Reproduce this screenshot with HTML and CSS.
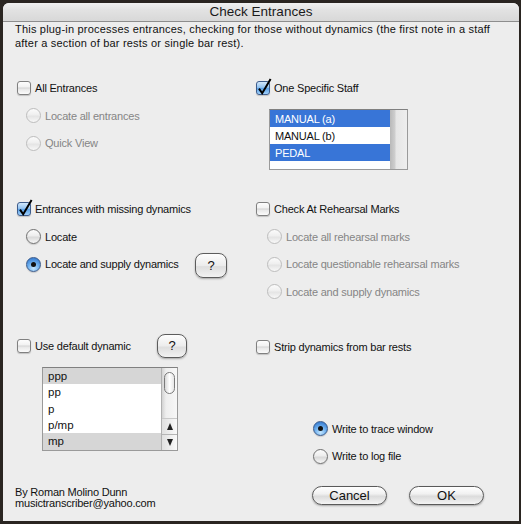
FILE: index.html
```html
<!DOCTYPE html>
<html>
<head>
<meta charset="utf-8">
<link rel="stylesheet" href="styles.css">
</head>
<body>
<div class="win">
  <div class="titlebar">Check Entrances</div>
  <p class="desc">This plug-in processes entrances, checking for those without dynamics (the first note in a staff<br>after a section of bar rests or single bar rest).</p>

  <div class="sec s1">
    <div class="col">
      <div class="opt"><span class="cb"></span><span>All Entrances</span></div>
      <div class="opt sub dis"><span class="rb off"></span><span>Locate all entrances</span></div>
      <div class="opt sub dis"><span class="rb off"></span><span>Quick View</span></div>
    </div>
    <div class="col">
      <div class="opt"><span class="cb on"><svg class="tick" viewBox="0 0 16 18"><path d="M3 10.6 L6.2 15.2 L14.6 1" fill="none" stroke="#000" stroke-width="2"/></svg></span><span>One Specific Staff</span></div>
      <div class="list staff">
        <div class="rows">
          <div class="row sel">MANUAL (a)</div>
          <div class="row">MANUAL (b)</div>
          <div class="row sel">PEDAL</div>
        </div>
        <div class="track"></div>
      </div>
    </div>
  </div>

  <div class="sec s2">
    <div class="col">
      <div class="opt"><span class="cb on"><svg class="tick" viewBox="0 0 16 18"><path d="M3 10.6 L6.2 15.2 L14.6 1" fill="none" stroke="#000" stroke-width="2"/></svg></span><span>Entrances with missing dynamics</span></div>
      <div class="opt sub"><span class="rb"></span><span>Locate</span></div>
      <div class="opt sub help-row w210"><span class="pair"><span class="rb on"></span><span>Locate and supply dynamics</span></span><span class="help big">?</span></div>
    </div>
    <div class="col rcol">
      <div class="opt"><span class="cb"></span><span>Check At Rehearsal Marks</span></div>
      <div class="opt rsub dis"><span class="rb off"></span><span>Locate all rehearsal marks</span></div>
      <div class="opt rsub dis"><span class="rb off"></span><span>Locate questionable rehearsal marks</span></div>
      <div class="opt rsub dis"><span class="rb off"></span><span>Locate and supply dynamics</span></div>
    </div>
  </div>

  <div class="sec s3">
    <div class="col">
      <div class="opt help-row w170"><span class="pair"><span class="cb"></span><span>Use default dynamic</span></span><span class="help small">?</span></div>
      <div class="list dyn">
        <div class="rows">
          <div class="row hl">ppp</div>
          <div class="row">pp</div>
          <div class="row">p</div>
          <div class="row">p/mp</div>
          <div class="row hl">mp</div>
        </div>
        <div class="sbar">
          <div class="thumb"></div>
          <div class="arrows">
            <span class="arr up"></span>
            <span class="arr down"></span>
          </div>
        </div>
      </div>
    </div>
    <div class="col">
      <div class="opt strip"><span class="cb"></span><span>Strip dynamics from bar rests</span></div>
      <div class="opt out first"><span class="rb on"></span><span>Write to trace window</span></div>
      <div class="opt out"><span class="rb"></span><span>Write to log file</span></div>
    </div>
  </div>

  <div class="footer">
    <div class="credit">By Roman Molino Dunn<br>musictranscriber@yahoo.com</div>
    <div class="btns">
      <span class="btn">Cancel</span>
      <span class="btn">OK</span>
    </div>
  </div>
</div>
</body>
</html>
```
FILE: styles.css
```css
html, body {
  margin: 0;
  padding: 0;
}
body {
  background: #2a2521;
  width: 521px;
  height: 524px;
  overflow: hidden;
  font-family: "Liberation Sans", Arial, sans-serif;
  font-size: 11px;
  letter-spacing: -0.2px;
  color: #111;
}
.win {
  margin: 3px 0 0 3px;
  width: 516px;
  height: 518px;
  background: #ededed;
  border-radius: 6px 6px 0 0;
  overflow: hidden;
}
.titlebar {
  height: 18px;
  line-height: 18px;
  border-bottom: 1px solid #8d8d8d;
  background: linear-gradient(#f0f0f0, #e2e2e2 40%, #d8d8d8);
  text-align: center;
  font-size: 13.5px;
  letter-spacing: 0;
  color: #1a1a1a;
}
.desc {
  margin: 0;
  padding: 0 12px;
  line-height: 14px;
  white-space: nowrap;
  letter-spacing: 0.2px;
  color: #111;
}
.sec {
  display: grid;
  grid-template-columns: 239px 1fr;
  padding-left: 14px;
}
.s1 { margin-top: 30px; }
.s2 { margin-top: 31px; }
.s3 { margin-top: 38px; }
.col {
  display: flex;
  flex-direction: column;
  gap: 11.5px;
  align-items: flex-start;
}
.opt {
  height: 16px;
  display: flex;
  align-items: center;
  gap: 4px;
  white-space: nowrap;
}
.opt.dis { color: #858585; }
.sub { padding-left: 9px; }
.rsub { padding-left: 11px; }

/* checkbox */
.cb {
  position: relative;
  flex: none;
  width: 14px;
  height: 14px;
  box-sizing: border-box;
  border: 1px solid #808080;
  border-radius: 3px;
  background: linear-gradient(#fdfdfd, #f2f2f2 40%, #d8d8d8 50%, #e9e9e9 62%, #fbfbfb);
  box-shadow: 0 1px 1px rgba(0,0,0,0.18);
}
.cb.on {
  border-color: #3d5c8c;
  background: linear-gradient(#d2e8fc, #94c4f1 45%, #5aa0e6 52%, #9fd0fb);
}
.tick {
  position: absolute;
  left: -1px;
  top: -4px;
  width: 16px;
  height: 18px;
  overflow: visible;
}

/* radio */
.rb {
  position: relative;
  flex: none;
  width: 15px;
  height: 15px;
  box-sizing: border-box;
  border-radius: 50%;
  border: 1px solid #707070;
  background: linear-gradient(#fcfcfc, #ededed 45%, #d9d9d9 55%, #f7f7f7);
  box-shadow: 0 1px 1px rgba(0,0,0,0.15);
}
.rb.off {
  border-color: #bdbdbd;
  background: linear-gradient(#fbfbfb, #efefef 45%, #e4e4e4 55%, #f8f8f8);
  box-shadow: none;
}
.rb.on {
  border-color: #3a5a8a;
  background: radial-gradient(circle at 50% 80%, #c4e6ff 0%, #6fb0ee 45%, #3d82d4 80%);
}
.rb.on::after {
  content: "";
  position: absolute;
  left: 4px;
  top: 4px;
  width: 5px;
  height: 5px;
  border-radius: 50%;
  background: #111;
}

/* help buttons */
.help-row {
  justify-content: space-between;
}
.w210 { width: 201px; }
.w170 { width: 170px; }
.pair {
  display: flex;
  align-items: center;
  gap: 4px;
}
.help {
  flex: none;
  box-sizing: border-box;
  display: flex;
  align-items: center;
  justify-content: center;
  border: 1px solid #5c5c5c;
  border-radius: 8px;
  background: linear-gradient(#fdfdfd, #ececec 50%, #dedede 55%, #f2f2f2);
  box-shadow: 0 1px 2px rgba(0,0,0,0.3);
  font-size: 13px;
  color: #111;
}
.help.big { width: 32px; height: 25px; margin-top: 3px; }
.help.small { width: 30px; height: 24px; }

/* lists */
.list {
  display: flex;
  box-sizing: border-box;
  border: 1px solid #9a9a9a;
  border-top-color: #808080;
  background: #fff;
  overflow: hidden;
}
.rows {
  flex: 1;
  display: flex;
  flex-direction: column;
}
.row {
  padding-left: 5px;
  display: flex;
  align-items: center;
  white-space: nowrap;
}
.staff {
  margin-left: 13px;
  margin-top: 1.5px;
  width: 139px;
  height: 61px;
}
.staff .row { height: 17px; }
.row.sel {
  background: #3875d7;
  color: #fff;
}
.track {
  width: 17px;
  background: linear-gradient(to right, #b9b9b9, #cfcfcf 5px, #e6e6e6 6px, #eeeeee);
}
.dyn {
  margin-left: 25px;
  margin-top: 1.5px;
  width: 136px;
  height: 84px;
}
.dyn .row {
  height: 16.8px;
  font-size: 11.5px;
  letter-spacing: 0;
}
.row.hl { background: #d6d6d6; }
.sbar {
  width: 15px;
  border-left: 1px solid #b0b0b0;
  background: linear-gradient(to right, #d2d2d2, #eeeeee 4px, #f7f7f7);
  display: flex;
  flex-direction: column;
  align-items: center;
}
.thumb {
  margin-top: 4px;
  width: 11px;
  height: 22px;
  box-sizing: border-box;
  border: 1px solid #7a7a7a;
  border-radius: 6px;
  background: linear-gradient(to right, #d8d8d8, #ffffff 50%, #e6e6e6);
}
.arrows {
  margin-top: auto;
  width: 100%;
  border-top: 1px solid #c9c9c9;
  background: linear-gradient(to right, #e0e0e0, #fafafa);
}
.arr {
  display: flex;
  align-items: center;
  justify-content: center;
  height: 15px;
}
.arr.up { border-bottom: 1px solid #b5b5b5; }
.arr::before {
  content: "";
  width: 0;
  height: 0;
  border-left: 3.5px solid transparent;
  border-right: 3.5px solid transparent;
}
.arr.up::before { border-bottom: 7px solid #222; }
.arr.down::before { border-top: 7px solid #222; }

.strip { margin-top: 1px; }
.out { padding-left: 57px; }
.out.first { margin-top: 54.5px; }

/* footer */
.footer {
  margin-top: 22px;
  display: flex;
  align-items: flex-start;
  padding: 0 35px 0 12px;
}
.credit {
  flex: 1;
  line-height: 11px;
  padding-top: 1px;
  white-space: nowrap;
}
.btns {
  display: flex;
  gap: 22px;
}
.btn {
  box-sizing: border-box;
  width: 75px;
  height: 19px;
  display: flex;
  align-items: center;
  justify-content: center;
  border: 1px solid #5a5a5a;
  border-radius: 10px;
  background: linear-gradient(#ffffff, #f1f1f1 40%, #dcdcdc 55%, #f4f4f4);
  box-shadow: 0 1px 2px rgba(0,0,0,0.3);
  font-size: 13px;
  letter-spacing: 0;
  color: #111;
}
```
